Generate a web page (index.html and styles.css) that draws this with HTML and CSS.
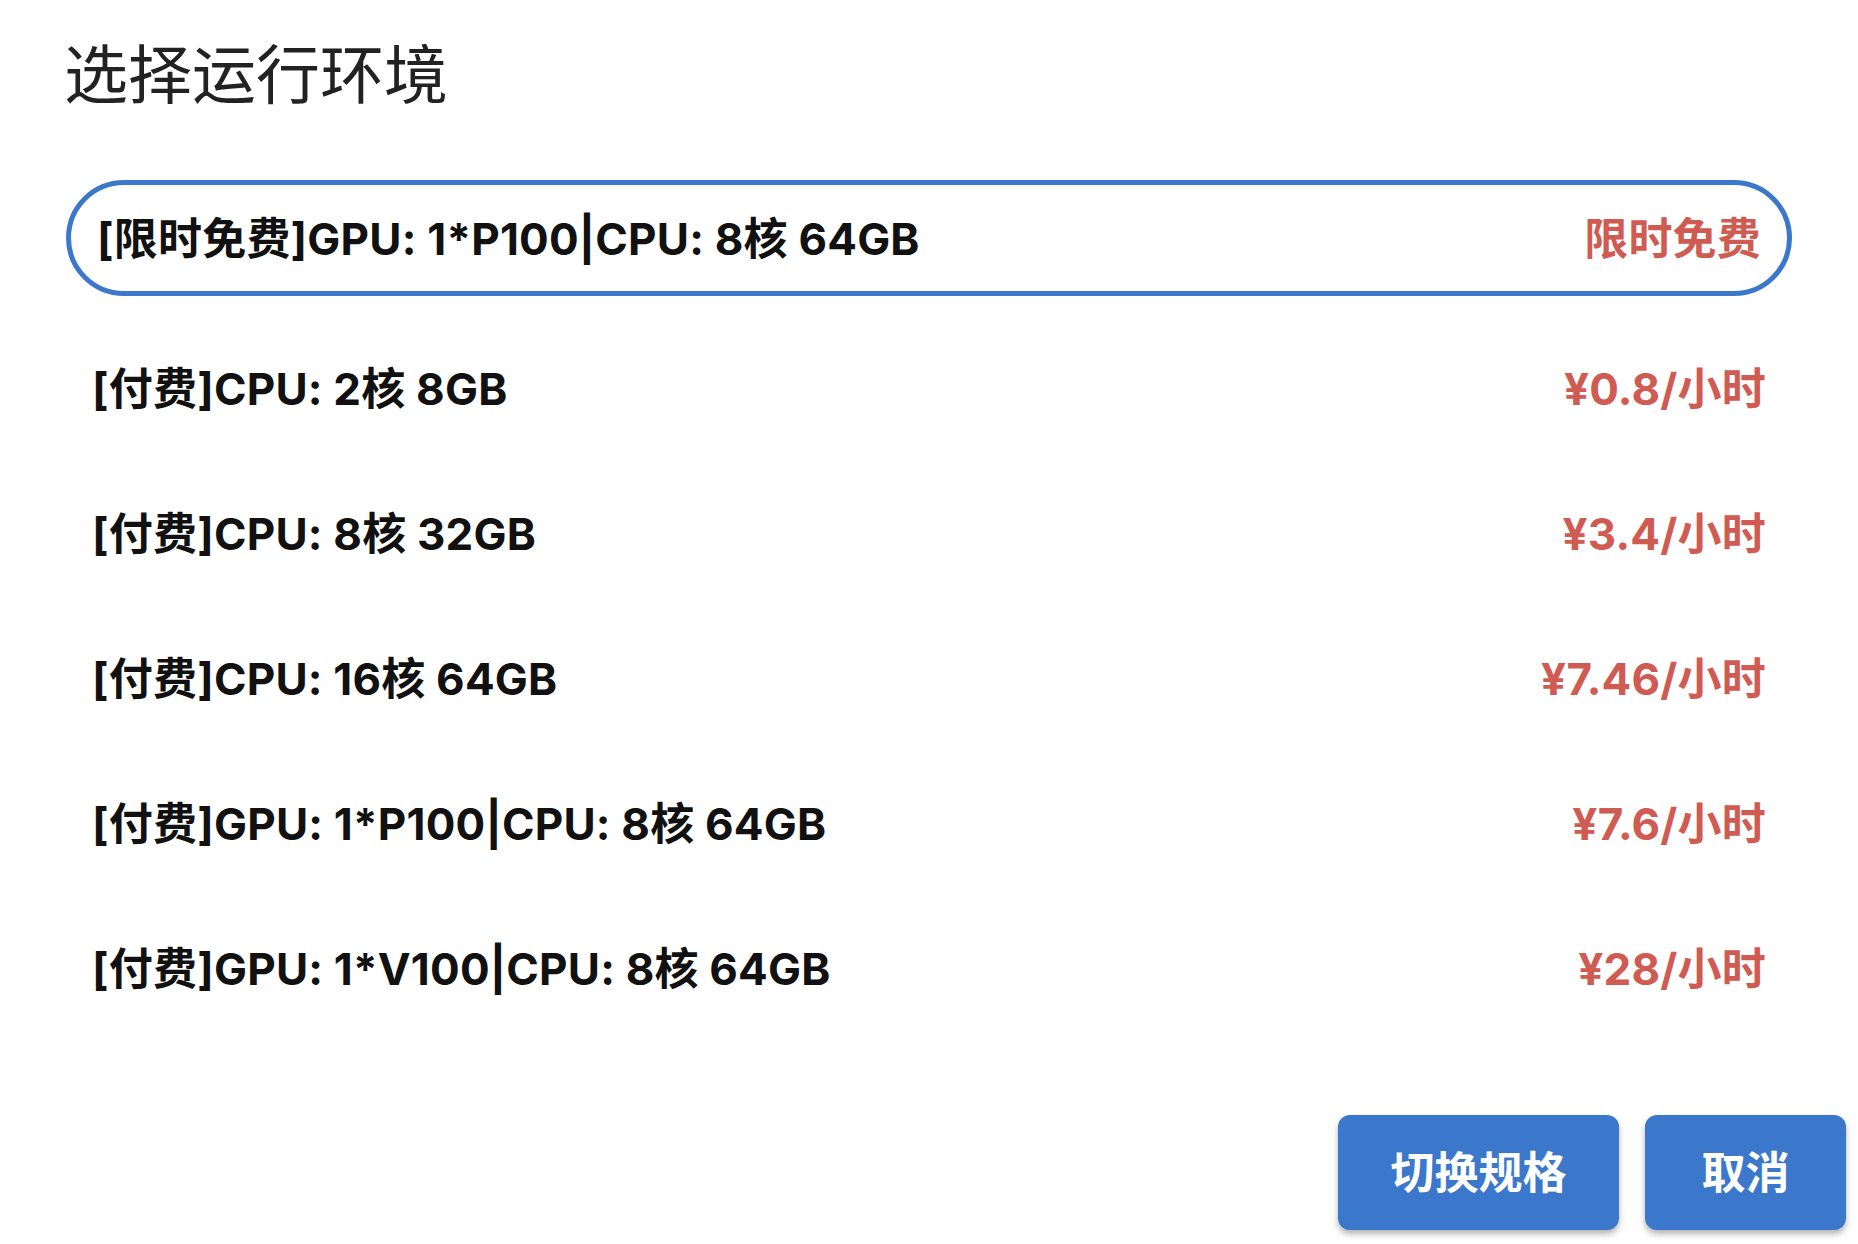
FILE: index.html
```html
<!DOCTYPE html>
<html lang="zh-CN">
<head>
<meta charset="utf-8">
<title>选择运行环境</title>
<link rel="stylesheet" href="styles.css">
</head>
<body>
<div class="dialog">
  <h1 class="title">选择运行环境</h1>
  <ul class="env-list">
    <li class="env selected"><span class="env-name">[限时免费]GPU: 1*P100|CPU: 8核 64GB</span><span class="env-price">限时免费</span></li>
    <li class="env"><span class="env-name">[付费]CPU: 2核 8GB</span><span class="env-price">¥0.8/小时</span></li>
    <li class="env"><span class="env-name">[付费]CPU: 8核 32GB</span><span class="env-price">¥3.4/小时</span></li>
    <li class="env"><span class="env-name">[付费]CPU: 16核 64GB</span><span class="env-price">¥7.46/小时</span></li>
    <li class="env"><span class="env-name">[付费]GPU: 1*P100|CPU: 8核 64GB</span><span class="env-price">¥7.6/小时</span></li>
    <li class="env"><span class="env-name">[付费]GPU: 1*V100|CPU: 8核 64GB</span><span class="env-price">¥28/小时</span></li>
  </ul>
  <div class="actions">
    <button class="btn">切换规格</button>
    <button class="btn">取消</button>
  </div>
</div>
</body>
</html>
```
FILE: styles.css
```css
html, body {
  margin: 0;
  padding: 0;
  background: #ffffff;
}
body {
  font-family: "Inter", "Noto Sans CJK SC", sans-serif;
  color: #111111;
}
.dialog {
  width: 1858px;
  height: 1244px;
  box-sizing: border-box;
  padding: 23px 12px 0 0;
}
.title {
  margin: 0 0 0 64px;
  font-family: "Noto Sans CJK SC", sans-serif;
  font-weight: 400;
  font-size: 64px;
  line-height: 95px;
  color: #222222;
}
.env-list {
  list-style: none;
  margin: 62px 54px 0 66px;
  padding: 0;
  display: flex;
  flex-direction: column;
  gap: 39px;
}
.env {
  height: 106px;
  box-sizing: border-box;
  padding: 0 26px 4px;
  display: flex;
  align-items: center;
  justify-content: space-between;
  font-size: 44px;
  font-weight: 700;
  letter-spacing: 0.2px;
}
.env.selected {
  height: 116px;
  border: 5px solid #3b78cc;
  border-radius: 60px;
}
.env-price {
  color: #d05b52;
}
.actions {
  margin-top: 94px;
  display: flex;
  justify-content: flex-end;
  gap: 26px;
}
.btn {
  height: 115px;
  border: none;
  border-radius: 12px;
  background: #3b78cc;
  color: #ffffff;
  font-family: "Noto Sans CJK SC", sans-serif;
  font-weight: 700;
  font-size: 44px;
  padding: 0 0 6px;
  box-shadow: 0 4px 6px rgba(0, 0, 0, 0.3);
}
.btn:first-child {
  width: 281px;
}
.btn:last-child {
  width: 201px;
}
```
